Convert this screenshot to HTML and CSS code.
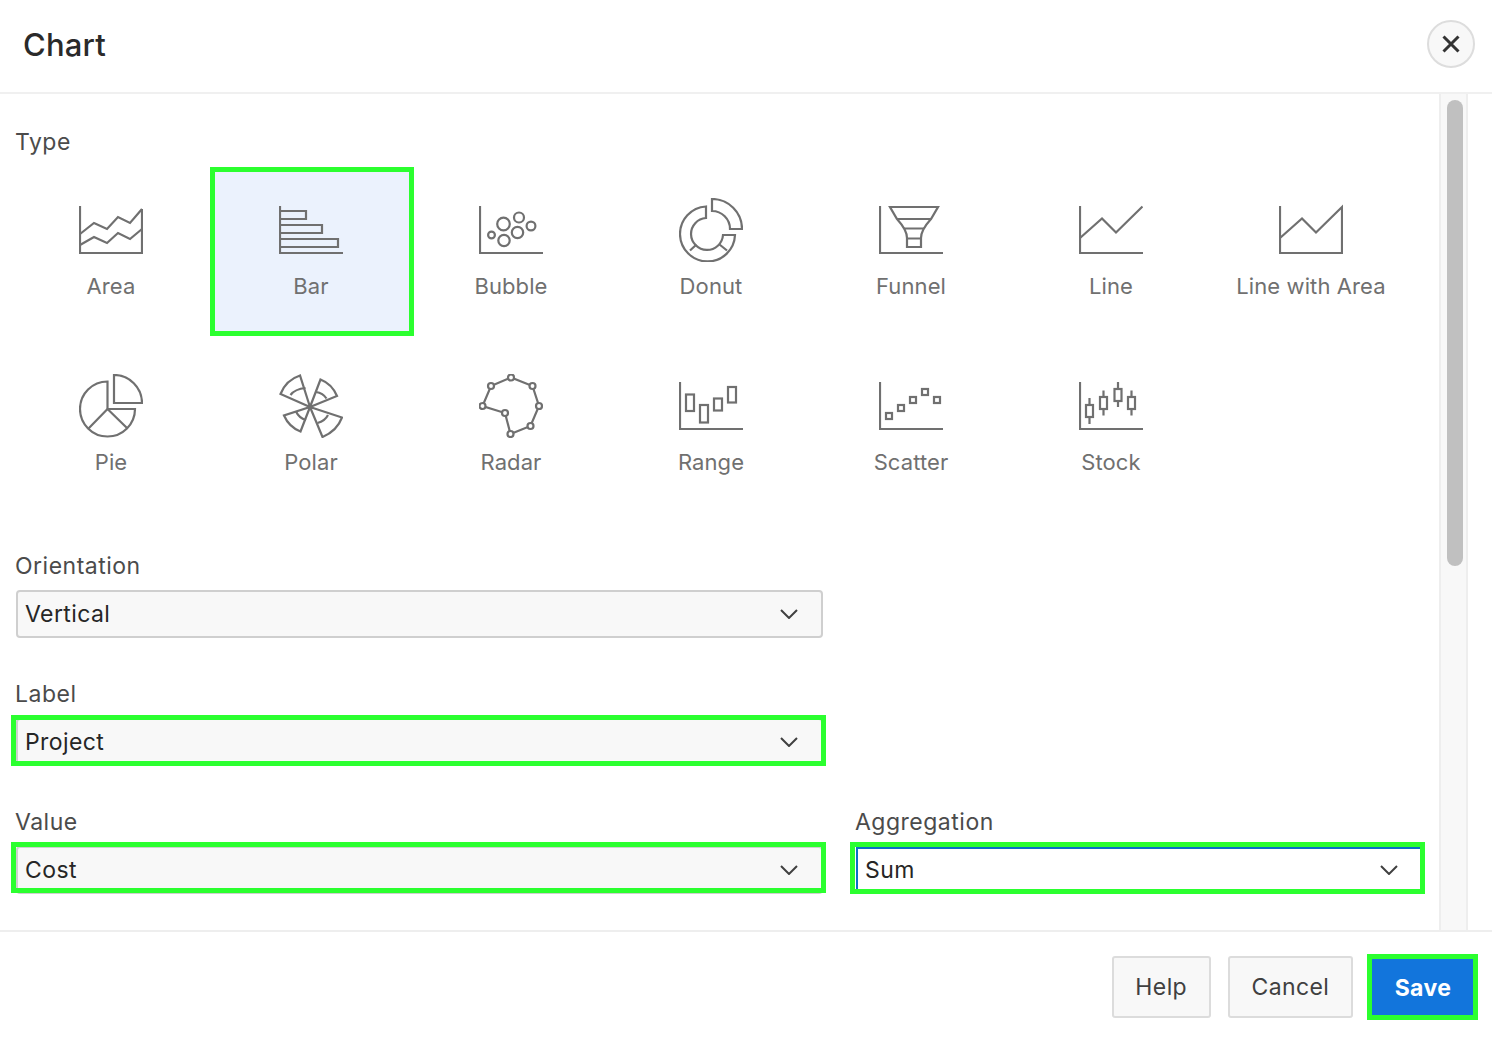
FILE: index.html
```html
<!DOCTYPE html>
<html lang="en">
<head>
    <meta charset="UTF-8">
    <title>Chart</title>
    <link rel="stylesheet" href="styles.css">
</head>
<body>
    <div class="dialog">
        <header class="dialog-header">
            <h1 class="dialog-title">Chart</h1>
            <button class="close-btn" aria-label="Close">
                <svg width="18" height="18" viewBox="0 0 18 18"><path d="M1.5 1.5l15 15M16.5 1.5l-15 15"/></svg>
            </button>
        </header>

        <div class="dialog-body">
            <main class="dialog-content">
                <div class="field-label type-label">Type</div>
                <div class="type-grid">
                    <div class="type-cell">
                        <svg class="chart-icon" viewBox="0 0 64 64"><path d="M1 8V55H63V11"/><path d="M1 36L15 25L28 31L39 19L51 25L63 11"/><path d="M1 47L15 39L28 45L39 35L51 41L63 31"/></svg>
                        <span class="type-name">Area</span>
                    </div>
                    <div class="type-cell is-selected">
                        <span class="select-mark"></span>
                        <svg class="chart-icon" viewBox="0 0 64 64"><path d="M1 8V55H64"/><path d="M1 13H27V21H1"/><path d="M1 27H43V35H1"/><path d="M1 41H59V49H1"/></svg>
                        <span class="type-name">Bar</span>
                    </div>
                    <div class="type-cell">
                        <svg class="chart-icon" viewBox="0 0 64 64"><path d="M1 8V55H64"/><circle cx="24.5" cy="26" r="6.3"/><circle cx="40" cy="19.5" r="5"/><circle cx="52" cy="28" r="4.4"/><circle cx="38.5" cy="34.5" r="5.7"/><circle cx="25" cy="42.5" r="5.7"/><circle cx="12.5" cy="37" r="3.4"/></svg>
                        <span class="type-name">Bubble</span>
                    </div>
                    <div class="type-cell">
                        <svg class="chart-icon" viewBox="0 0 64 64"><path d="M27 8.5A27.5 27.5 0 1 0 56 37H44A16 16 0 1 1 27 20Z"/><path d="M33 1A30 30 0 0 1 63 31H51A18 18 0 0 0 33 13Z"/><path d="M11 52.5L17.5 46.5M48 52.5L40.5 46.5"/></svg>
                        <span class="type-name">Donut</span>
                    </div>
                    <div class="type-cell">
                        <svg class="chart-icon" viewBox="0 0 64 64"><path d="M1 8V55H64"/><path d="M11 9H59L52 21Q42 32 42 40V49H28V40Q28 32 18 21Z"/><path d="M18 21H52M25 30.5H45M28 40.5H42"/></svg>
                        <span class="type-name">Funnel</span>
                    </div>
                    <div class="type-cell">
                        <svg class="chart-icon" viewBox="0 0 64 64"><path d="M1 8V55H64"/><path d="M1 40L23 20.5L37 34.5L63.5 8.5"/></svg>
                        <span class="type-name">Line</span>
                    </div>
                    <div class="type-cell">
                        <svg class="chart-icon" viewBox="0 0 64 64"><path d="M1 8V55H63V9L37 34.5L23 20.5L1 40"/></svg>
                        <span class="type-name">Line with Area</span>
                    </div>

                    <div class="type-cell">
                        <svg class="chart-icon" viewBox="0 0 64 64"><path d="M35 1A28 28 0 0 1 63 29H35Z"/><path d="M28.5 7.5V35H56A27.5 27.5 0 1 1 28.5 7.5Z"/><path d="M28.5 35L9.5 54.5M28.5 35L48.5 54.5"/></svg>
                        <span class="type-name">Pie</span>
                    </div>
                    <div class="type-cell">
                        <svg class="chart-icon" viewBox="0 0 64 64"><path d="M31 33L21 1.5Q7 6 1.5 20Z"/><path d="M31 33L41.5 5.5Q53 10 58 22Z"/><path d="M31 33L63 43.5Q58 57 43.5 63Z"/><path d="M31 33L21.5 57.5Q10 53 5 41.5Z"/><path d="M26.5 14Q16 15 11.5 21M37 18Q44 19 47.5 24.5M38.5 49Q46 47 49 41M27 46Q20 44 17 37.5"/></svg>
                        <span class="type-name">Polar</span>
                    </div>
                    <div class="type-cell">
                        <svg class="chart-icon" viewBox="0 0 64 64"><path d="M12 12L32 3.5L53.5 12L60 32L51.5 52L31.5 60L26 39L3.5 32Z"/><g class="node"><circle cx="32" cy="3.5" r="3"/><circle cx="53.5" cy="12" r="3"/><circle cx="60" cy="32" r="3"/><circle cx="51.5" cy="52" r="3"/><circle cx="31.5" cy="60" r="3"/><circle cx="26" cy="39" r="3"/><circle cx="3.5" cy="32" r="3"/><circle cx="12" cy="12" r="3"/></g></svg>
                        <span class="type-name">Radar</span>
                    </div>
                    <div class="type-cell">
                        <svg class="chart-icon" viewBox="0 0 64 64"><path d="M1 8V55H64"/><rect x="7" y="20.5" width="8" height="16.5"/><rect x="21" y="31" width="8" height="17.5"/><rect x="35" y="24.5" width="8" height="12"/><rect x="49" y="13" width="8" height="15.5"/></svg>
                        <span class="type-name">Range</span>
                    </div>
                    <div class="type-cell">
                        <svg class="chart-icon" viewBox="0 0 64 64"><path d="M1 8V55H64"/><rect x="7" y="39" width="6" height="6"/><rect x="19" y="31" width="6" height="6"/><rect x="31" y="23" width="6" height="6"/><rect x="43" y="15" width="6" height="6"/><rect x="55" y="23" width="6" height="6"/></svg>
                        <span class="type-name">Scatter</span>
                    </div>
                    <div class="type-cell">
                        <svg class="chart-icon" viewBox="0 0 64 64"><path d="M1 8V55H64"/><rect x="7" y="31" width="7" height="12"/><rect x="21" y="23" width="7" height="12"/><rect x="35.5" y="15" width="7" height="12"/><rect x="49" y="23" width="7" height="12"/><path d="M10.5 24V31M10.5 43V50M24.5 16.5V23M24.5 35V41.5M39 8V15M39 27V33M52.5 16.5V23M52.5 35V41.5"/></svg>
                        <span class="type-name">Stock</span>
                    </div>
                </div>

                <div class="form-grid">
                    <div class="field">
                        <label class="field-label">Orientation</label>
                        <div class="select-box"><span>Vertical</span><svg class="chevron" viewBox="0 0 18 10"><path d="M1 1l8 8 8-8"/></svg></div>
                    </div>
                    <div></div>
                    <div class="field">
                        <label class="field-label">Label</label>
                        <div class="select-box"><span>Project</span><svg class="chevron" viewBox="0 0 18 10"><path d="M1 1l8 8 8-8"/></svg><span class="green-mark"></span></div>
                    </div>
                    <div></div>
                    <div class="field">
                        <label class="field-label">Value</label>
                        <div class="select-box is-value"><span>Cost</span><svg class="chevron" viewBox="0 0 18 10"><path d="M1 1l8 8 8-8"/></svg><span class="green-mark"></span></div>
                    </div>
                    <div class="field">
                        <label class="field-label">Aggregation</label>
                        <div class="select-box is-focused"><span>Sum</span><svg class="chevron" viewBox="0 0 18 10"><path d="M1 1l8 8 8-8"/></svg><span class="green-mark"></span></div>
                    </div>
                </div>
            </main>
            <div class="scroll-track"><div class="scroll-thumb"></div></div>
        </div>

        <footer class="dialog-footer">
            <button class="btn">Help</button>
            <button class="btn">Cancel</button>
            <button class="btn btn-primary">Save<span class="green-mark"></span></button>
        </footer>
    </div>
</body>
</html>
```
FILE: styles.css
```css
*{
    box-sizing: border-box;
}

body{
    margin: 0;
    background: white;
    font-family: Inter, "Liberation Sans", sans-serif;
    overflow: hidden;
}

.dialog{
    height: 1044px;
    display: flex;
    flex-direction: column;
}

.dialog-header{
    height: 94px;
    padding: 20px 17px 0 23px;
    display: flex;
    justify-content: space-between;
    border-bottom: solid 2px #f0f0f0;
}

.dialog-title{
    margin: 4px 0 0;
    font-size: 31px;
    line-height: 42px;
    letter-spacing: 0.2px;
    font-weight: 500;
    color: #2a2a2a;
}

.close-btn{
    width: 48px;
    height: 48px;
    padding: 0;
    border-radius: 50%;
    border: solid 2px #dddddd;
    background: #f8f8f8;
    display: flex;
    align-items: center;
    justify-content: center;
}

.close-btn path{
    fill: none;
    stroke: #333333;
    stroke-width: 3;
}

.dialog-body{
    height: 836px;
    display: flex;
    justify-content: space-between;
    padding-right: 24px;
}

.dialog-content{
    width: 1415px;
    padding-top: 36px;
}

.scroll-track{
    width: 29px;
    padding: 6px 6px 0;
    background: #f8f8f8;
    border-left: solid 2px #eeeeee;
    border-right: solid 2px #eeeeee;
}

.scroll-thumb{
    width: 16px;
    height: 466px;
    border-radius: 8px;
    background: #c0c0c0;
}

.field-label{
    display: block;
    margin-left: -1px;
    font-size: 23px;
    line-height: 24px;
    letter-spacing: 0.5px;
    color: #4b4b4b;
}

.type-label{
    margin: 0 0 10px 15px;
}

.type-grid{
    margin: 0 0 38px 11px;
    display: grid;
    grid-template-columns: repeat(7, 200px);
    grid-auto-rows: 176px;
}

.type-cell{
    position: relative;
    padding-top: 34px;
    display: flex;
    flex-direction: column;
    align-items: center;
}

.chart-icon{
    position: relative;
    width: 64px;
    height: 64px;
    fill: none;
    stroke: #707070;
    stroke-width: 2.2;
}

.chart-icon .node circle{
    fill: white;
}

.type-name{
    position: relative;
    margin-top: 12px;
    font-size: 22px;
    line-height: 24px;
    letter-spacing: 0.1px;
    color: #707070;
}

/* green frames sit over the controls, they are not part of the layout */
.select-mark{
    position: absolute;
    top: 3px;
    left: -1px;
    width: 204px;
    height: 169px;
    background: #ebf2fd;
    border: solid 5px #2bff2f;
}

.form-grid{
    margin-left: 16px;
    display: grid;
    grid-template-columns: 807px 566px;
    column-gap: 33px;
    row-gap: 44px;
}

.select-box{
    position: relative;
    height: 48px;
    margin-top: 12px;
    padding: 0 23px 0 7px;
    display: flex;
    align-items: center;
    justify-content: space-between;
    background: #f8f8f8;
    border: solid 2px #cfcfcf;
    border-radius: 4px;
    font-size: 23px;
    letter-spacing: 0.4px;
    color: #262626;
}

.select-box.is-focused{
    height: 47px;
    margin-top: 13px;
    padding: 0 24px 3px 7px;
    background: white;
    border: none;
    border-left: solid 2px #0a70c5;
    border-top: solid 2px #0a70c5;
    border-radius: 0;
}

.chevron{
    width: 18px;
    height: 10px;
    fill: none;
    stroke: #404040;
    stroke-width: 2;
}

.green-mark{
    position: absolute;
    top: -5px;
    left: -7px;
    right: -5px;
    bottom: -2px;
    border: solid 5px #2bff2f;
}

.is-value .green-mark{
    top: -6px;
    bottom: -1px;
}

.is-focused .green-mark{
    top: -7px;
    left: -8px;
    right: -3px;
    bottom: 0;
}

.dialog-footer{
    flex: 1;
    padding: 24px 18px 0 0;
    display: flex;
    justify-content: flex-end;
    border-top: solid 2px #eeeeee;
}

.btn{
    height: 62px;
    margin-left: 17px;
    padding: 0 21.7px;
    font-family: inherit;
    font-size: 23px;
    letter-spacing: 0.4px;
    color: #404040;
    background: #f8f8f8;
    border: solid 2px #dcdcdc;
    border-radius: 3px;
}

.btn-primary{
    position: relative;
    width: 102px;
    height: 57px;
    margin: 3px 0 0 19px;
    padding: 0;
    color: white;
    font-weight: 700;
    background: #1275dc;
    border: none;
    border-radius: 0;
}

.btn-primary .green-mark{
    top: -5px;
    left: -5px;
    right: -4px;
    bottom: -4px;
}
```
